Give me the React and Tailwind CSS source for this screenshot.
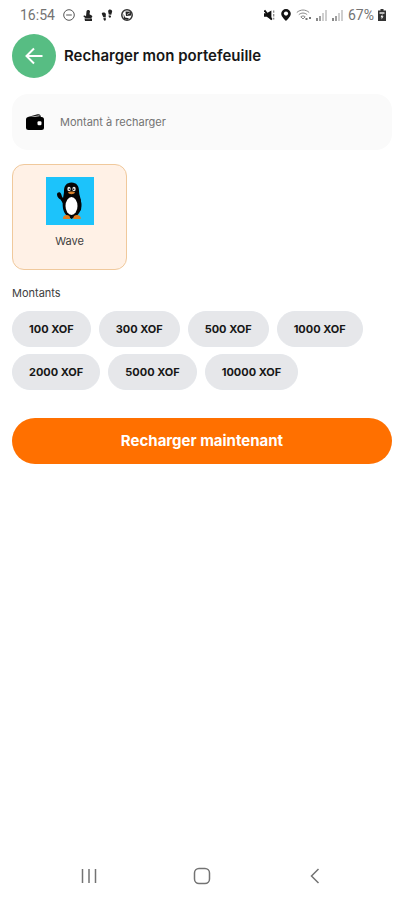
import React, { useState } from 'react'

const AMOUNTS = [100, 300, 500, 1000, 2000, 5000, 10000]

function SignalIcon() {
  return (
    <svg viewBox="0 0 12 12" className="h-3 w-3" fill="#888">
      <rect x="0" y="9" width="2" height="3" />
      <rect x="3" y="7" width="2" height="5" opacity="0.8" />
      <rect x="6" y="4" width="2" height="8" opacity="0.4" />
      <rect x="9" y="1" width="2" height="11" opacity="0.4" />
    </svg>
  )
}

function StatusBar() {
  return (
    <div className="flex h-[30px] items-center justify-between pr-[18px] pl-5 font-['Roboto',sans-serif] text-sm text-neutral-500">
      <div className="flex items-center gap-2">
        <span>16:54</span>
        {/* Do not disturb */}
        <svg viewBox="0 0 12 12" className="h-3 w-3" fill="none" stroke="#555">
          <circle cx="6" cy="6" r="5.3" />
          <path d="M3.2 6h5.6" />
        </svg>
        {/* Touch */}
        <svg viewBox="0 0 10 12" className="h-3 w-2.5" fill="#222">
          <path d="M3.500 2.500C3.500.5 7 .5 7 2.500L6.500 5.200l2.200 1.300c.8.5.8 1.300.1 2L7.500 9.500H3L.7 7.800c-.6-.9.3-1.700 1.100-1.200l1.200.6z" />
          <path d="M1.500 9.500h7.500V12h-7z" />
          <path d="M3 9.800h4" stroke="#aaa" strokeWidth=".6" />
        </svg>
        {/* Footsteps */}
        <svg viewBox="0 0 12 13" className="h-3 w-3" fill="#222">
          <path d="M.3 5.200C.3 3.200 4.600 3.100 4.800 5.400L4.600 9.300 2 9zM2.200 9.800l2.600.3c.2 3.400-2.700 3.300-2.600.1zM7.200 2.500C7.200-.2 11.600-.2 11.600 2.700L10.600 6.300 7.900 6zM7.800 6.900l2.600.3c0 3.200-3 2.900-2.600 0z" />
        </svg>
        <svg viewBox="0 0 12 12" className="h-3 w-3">
          <circle cx="6" cy="6" r="5.200" fill="#fff" stroke="#333" strokeWidth="1.500" />
          <path d="M4.500 2.500 9.800 2.800l.3 3.700L5 7zM2.500 4.500l1.500 4 4 .7-1.500 1.500-3.500-1z" fill="#222" />
          <path d="M6 5.500 9 3.800" stroke="#ddd" strokeWidth=".8" />
        </svg>
      </div>
      <div className="flex items-center">
        {/* Muted speaker */}
        <svg viewBox="0 0 13 12" className="mr-1 h-3 w-3">
          <path d="M0 4h3l5-3v10.500L3 8H0z" fill="#111" />
          <path d="M.5 1l8 10" stroke="#111" strokeWidth="1.800" />
          <path d="M10.500 1v2.500M10.500 5v2.500M10.500 9v2" stroke="#888" strokeWidth="1.400" />
        </svg>
        <svg viewBox="0 0 12 13" className="mr-1 h-3 w-3">
          <path d="M6 0a5.200 5.200 0 0 1 5.200 5.200C11.200 8.500 6 13 6 13S.8 8.500.8 5.200A5.200 5.200 0 0 1 6 0z" fill="#111" />
          <circle cx="6" cy="5" r="2.300" fill="#fff" />
        </svg>
        <svg viewBox="0 0 16 12" className="mr-1 h-3 w-4" fill="none" stroke="#888">
          <path d="M.8 3.500c3.800-3.300 8.700-3.300 12.400 0M2.800 5.700c2.600-2.200 5.800-2.200 8.400 0M4.800 7.800c1.400-1.100 3-1.100 4.400 0L7 10z" />
          <path d="M9.500 10h2M13 9h2" stroke="#777" strokeWidth="2" />
        </svg>
        <span className="mr-1"><SignalIcon /></span>
        <span className="mr-1"><SignalIcon /></span>
        <span>67%</span>
        <svg viewBox="0 0 8 12" className="ml-1 h-3 w-2">
          <path d="M2.500 0h3v1.500H8V12H0V1.500h2.500z" fill="#333" />
          <path d="M1.500 3h5v2h-5z" fill="#bbb" />
          <path d="M4.500 5 2.500 8.200h1.200L3.500 10.500l2-3.200H4.300z" fill="#fff" />
        </svg>
      </div>
    </div>
  )
}

function WalletIcon() {
  return (
    <svg viewBox="0 0 18 16" className="h-4 w-[18px]">
      <path d="M1 3.300 11.500.3c1.500-.4 2.800.2 3.200 1.700l.2 1.200H1z" fill="#111" />
      <path d="M3.500 3.500 13.500 1.700" stroke="#fafafa" strokeWidth=".7" />
      <rect y="3" width="18" height="13" rx="2.500" fill="#000" />
      <rect x="11.500" y="7.200" width="4" height="4" rx="1.200" fill="#fff" />
    </svg>
  )
}

function PenguinLogo() {
  return (
    <svg viewBox="0 0 48 48" className="h-12 w-12">
      <rect width="48" height="48" fill="#1cc3fb" />
      {/* Raised wing */}
      <path d="M20 22 16.500 20.500C15.500 19 15.500 16.500 14 15.500c-1.200-.6-3 .3-3 2 .1 2.400 1.700 4 3.500 5L18 28z" fill="#050505" />
      {/* Head and body */}
      <path d="M25.500 5.500c-5 0-7.500 3.500-7.500 8.500 0 3.500-1 5.500-1.300 11-.3 6 .8 11.500 4.800 14L25.500 42l4.500-3C34.500 36.500 35.500 31 35.200 26c-.2-5-2.200-7.500-2.200-12 0-5-2.500-8.500-7.500-8.500z" fill="#050505" />
      <path d="M33 19.500c2.300 3 3 9 1.800 14-.7.200-1.800-.3-2.100-1z" fill="#050505" />
      <ellipse cx="25.500" cy="29" rx="6" ry="9" fill="#fff" />
      <ellipse cx="23" cy="12" rx="1.700" ry="2.200" fill="#e8e8e8" />
      <ellipse cx="28" cy="12" rx="1.700" ry="2.200" fill="#e8e8e8" />
      <circle cx="23.400" cy="12.300" r=".8" fill="#111" />
      <circle cx="27.600" cy="12.300" r=".8" fill="#111" />
      <path d="M22 15.500c1.500-1.200 5.500-1.200 7 0-1 2.200-6 2.200-7 0z" fill="#d9822b" />
      <path d="M17 41c.3-3 4-4 6.500-2l1 3h-7.300z" fill="#e07e20" />
      <path d="M27 42l1-3c2.500-2 6.500-1 6.800 2l-.2 1z" fill="#e07e20" />
    </svg>
  )
}

function SystemNav() {
  return (
    <nav className="flex h-12 items-center justify-around px-8 text-neutral-500">
      <button type="button" aria-label="Applications récentes">
        <svg viewBox="0 0 18 18" className="h-[18px] w-[18px]" stroke="currentColor" strokeWidth="1.500">
          <path d="M2.500 2v14M9 2v14M15.500 2v14" />
        </svg>
      </button>
      <button type="button" aria-label="Accueil">
        <svg viewBox="0 0 18 18" className="h-[18px] w-[18px]" fill="none" stroke="currentColor" strokeWidth="1.500">
          <rect x="1.500" y="1.500" width="15" height="15" rx="4.500" />
        </svg>
      </button>
      <button type="button" aria-label="Retour système">
        <svg viewBox="0 0 18 18" className="h-[18px] w-[18px]" fill="none" stroke="currentColor" strokeWidth="1.500">
          <path d="M12.500 2 5.500 9l7 7" />
        </svg>
      </button>
    </nav>
  )
}

export default function App() {
  const [amount, setAmount] = useState('')

  return (
    <div className="flex min-h-screen flex-col bg-white font-['Inter',sans-serif] text-neutral-900">
      <StatusBar />

      <header className="flex items-center gap-2 px-3 pt-1">
        <button type="button" aria-label="Retour" className="flex h-11 w-11 items-center justify-center rounded-full bg-[#57bd83]">
          <svg viewBox="0 0 18 18" className="h-[18px] w-[18px]" fill="none" stroke="#fff" strokeWidth="2">
            <path d="M17.500 9H1.500M9 1.500 1.500 9 9 16.500" />
          </svg>
        </button>
        <h1 className="text-[15px] font-semibold">Recharger mon portefeuille</h1>
      </header>

      <main className="flex-1 px-3 pt-4">
        <label className="flex h-14 items-center gap-4 rounded-2xl bg-neutral-50 px-3.5">
          <WalletIcon />
          <input
            type="text"
            inputMode="numeric"
            aria-label="Montant à recharger"
            placeholder="Montant à recharger"
            value={amount}
            onChange={(e) => setAmount(e.target.value)}
            className="min-w-0 flex-1 bg-transparent text-[11px] outline-none placeholder:text-neutral-500"
          />
        </label>

        <button
          type="button"
          aria-pressed="true"
          className="mt-3.5 flex w-[115px] flex-col items-center rounded-xl border border-[#f0c99c] bg-[#fff1e6] pt-3 pb-5"
        >
          <PenguinLogo />
          <span className="mt-2 text-[11px] leading-4 text-neutral-700">Wave</span>
        </button>

        <h2 className="mt-[15px] text-[11px] leading-4 text-neutral-700">Montants</h2>
        <div className="mt-2.5 flex flex-wrap gap-x-2 gap-y-[7px]">
          {AMOUNTS.map((value) => (
            <button
              key={value}
              type="button"
              onClick={() => setAmount(String(value))}
              className="h-9 rounded-full border border-gray-200 bg-[#e6e7ea] px-4 text-[11px] font-bold"
            >
              {value} XOF
            </button>
          ))}
        </div>

        <button type="button" className="mt-7 h-[46px] w-full rounded-full bg-[#ff7000] text-[15px] font-bold text-white">
          Recharger maintenant
        </button>
      </main>

      <SystemNav />
    </div>
  )
}
